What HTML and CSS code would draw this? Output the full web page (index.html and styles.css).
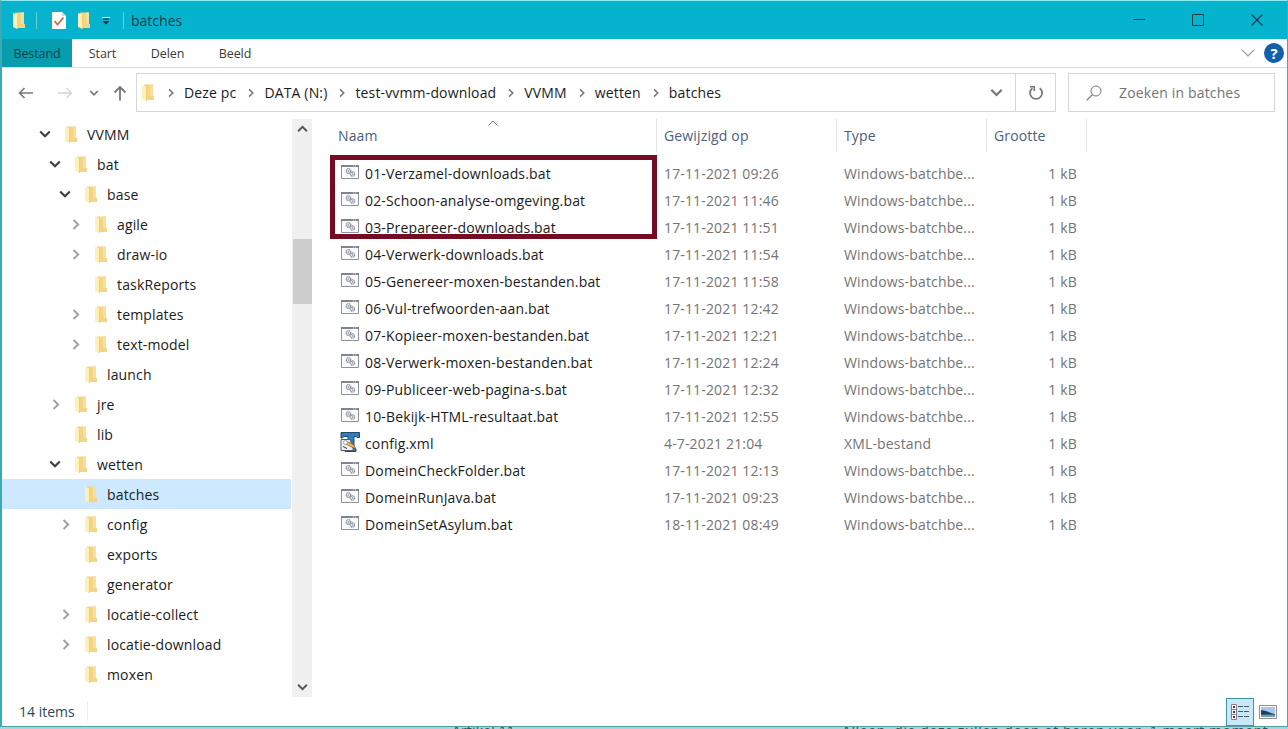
FILE: index.html
```html
<!DOCTYPE html>
<html lang="nl">
<head>
    <meta charset="UTF-8">
    <meta name="viewport" content="width=device-width, initial-scale=1.0">
    <title>batches</title>
    <link rel="stylesheet" href="styles.css">
</head>
<body>
    <!-- Shared icons -->
    <svg class="sprite" width="0" height="0">
        <symbol id="folder" viewBox="0 0 14 17">
            <path d="M3 .5h9v11l1 1V16H5z" fill="#f3d583"/>
            <path d="M9 .5h3v11.500H9z" fill="#f8e09a"/>
            <path d="M1 1l4.500 1.500V17L1 15z" fill="#fdf0b8"/>
            <path d="M5.500 2.500V17" stroke="#ecca74" stroke-width=".8"/>
        </symbol>
        <symbol id="right" viewBox="0 0 10 12">
            <path d="M2.500 1.500L7.200 6l-4.700 4.500" fill="none" stroke="currentColor" stroke-width="1.900"/>
        </symbol>
        <symbol id="down" viewBox="0 0 12 10">
            <path d="M1.200 2.500L6 7.300l4.800-4.800" fill="none" stroke="currentColor" stroke-width="2.100"/>
        </symbol>
        <symbol id="bat" viewBox="0 0 18 14">
            <path d="M.5.500h17v13H.5z" fill="#fbfbfd" stroke="#8e9299"/>
            <path d="M0 1h18" stroke="#80858d" stroke-width="2"/>
            <path d="M12 1h4" stroke="#e4e6ea" stroke-dasharray="1 1"/>
            <circle cx="7.500" cy="6" r="2.300" fill="#eceef1" stroke="#858b95" stroke-width="1.200" stroke-dasharray="1.300 .4"/>
            <circle cx="7.500" cy="6" r=".8" fill="#858b95"/>
            <circle cx="11.500" cy="9" r="2.100" fill="#eceef1" stroke="#858b95" stroke-width="1.200" stroke-dasharray="1.300 .4"/>
            <circle cx="11.500" cy="9" r=".7" fill="#858b95"/>
        </symbol>
        <symbol id="xml" viewBox="0 0 20 20">
            <path d="M1 .5h18.500v5H17l-1-1h-2V16l2 1v2.500H5V16l3-1V4.500H4L2 6H1z" fill="#2f7dbb" stroke="#24486a"/>
            <path d="M1 7.500h9l3 8.500v2.500H1z" fill="#edf0f1" stroke="#51606c"/>
            <path d="M6 9l7 3.500 3 4-4.500-1.500L6 12z" fill="#edb45d" stroke="#8b632c" stroke-width=".7"/>
            <circle cx="5.500" cy="10.500" r="2" fill="#fff" stroke="#86909b" stroke-width=".8"/>
            <path d="M3 14.500l4 2" stroke="#303c46"/>
        </symbol>
    </svg>

    <div class="window">
        <header class="titlebar">
            <svg class="folder title-folder"><use href="#folder"/></svg>
            <span class="divider"></span>
            <svg class="check" viewBox="0 0 14 17"><path d="M0 0h10l4 4v13H0z" fill="#fff"/><path d="M10 0v4h4" fill="#cdd8df"/><path d="M2.500 9l3 3.500 6-7" fill="none" stroke="#c9704f" stroke-width="1.800"/></svg>
            <svg class="folder quick-folder"><use href="#folder"/></svg>
            <svg class="customize" viewBox="0 0 8 8"><path d="M0 .5h8" stroke="#d7f4f8"/><path d="M1 2h6" stroke="#123"/><path d="M.5 4h7L4 7.500z" fill="#123"/></svg>
            <span class="divider"></span>
            <span class="title">batches</span>
            <div class="controls">
                <svg viewBox="0 0 12 12"><path d="M0 5.500h12" stroke="#183947"/></svg>
                <svg viewBox="0 0 12 12"><path d="M.5.500h11v11H.5z" fill="none" stroke="#183947"/></svg>
                <svg viewBox="0 0 12 12"><path d="M.5.500l11 11m0-11l-11 11" stroke="#183947" stroke-width="1.200"/></svg>
            </div>
        </header>

        <nav class="ribbon">
            <span class="tab active">Bestand</span>
            <span class="tab start">Start</span>
            <span class="tab delen">Delen</span>
            <span class="tab beeld">Beeld</span>
            <svg class="expand" viewBox="0 0 14 8"><path d="M.7.700L7 7 13.300.700" fill="none" stroke="#969696" stroke-width="1.100"/></svg>
            <span class="help">?</span>
        </nav>

        <div class="toolbar">
            <svg class="back" viewBox="0 0 16 12"><path d="M15 6H1.500M6.500 1l-5 5 5 5" fill="none" stroke="#777" stroke-width="1.600"/></svg>
            <svg class="forward" viewBox="0 0 16 12"><path d="M1 6h13.500M9.500 1l5 5-5 5" fill="none" stroke="#d4d4d4" stroke-width="1.400"/></svg>
            <svg class="recent"><use href="#down"/></svg>
            <svg class="up" viewBox="0 0 14 16"><path d="M7 15.500V2M1.500 7.500L7 2l5.500 5.500" fill="none" stroke="#777" stroke-width="1.800"/></svg>
            <div class="address">
                <svg class="folder"><use href="#folder"/></svg>
                <div class="crumbs" id="crumbs"></div>
                <svg class="history"><use href="#down"/></svg>
                <div class="refresh"><svg viewBox="0 0 16 16"><path d="M11.700 3.200a6 6 0 1 1-7.300 0" fill="none" stroke="#777" stroke-width="1.800"/><path d="M2 1.800h4.300v4.300" fill="none" stroke="#777" stroke-width="1.600"/></svg></div>
            </div>
            <div class="search">
                <svg viewBox="0 0 16 16"><circle cx="10" cy="6" r="5" fill="none" stroke="#777"/><path d="M6.500 9.500L.7 15.300" stroke="#777" stroke-width="1.200"/></svg>
                <span>Zoeken in batches</span>
            </div>
        </div>

        <main class="content">
            <div class="tree" id="tree"></div>
            <div class="scrollbar">
                <svg class="scroll-up"><use href="#down"/></svg>
                <div class="thumb"></div>
                <svg class="scroll-down"><use href="#down"/></svg>
            </div>
            <section class="files">
                <div class="file-head">
                    <span class="head-name">Naam<svg class="sort" viewBox="0 0 10 6"><path d="M.5 5.500L5 1l4.500 4.500" fill="none" stroke="#777"/></svg></span>
                    <span>Gewijzigd op</span>
                    <span>Type</span>
                    <span>Grootte</span>
                </div>
                <div id="files"></div>
                <div class="marker"></div>
            </section>
        </main>

        <footer class="status">
            <span class="count">14 items</span>
            <span class="view selected"><svg viewBox="0 0 18 16"><path d="M.5.500h5v15h-5zM.5 5.500h5M.5 10.500h5" fill="#fff" stroke="#8b7f8a"/><path d="M2 3h2M2 8h2M2 13h2" stroke="#223c55" stroke-width="2"/><path d="M7 2.500h5m1 0h5M7 7.500h5m1 0h5M7 12.500h5m1 0h5" stroke="#4c5c67"/></svg></span>
            <span class="view"><svg viewBox="0 0 18 14"><path d="M.5.500h17v13H.5z" fill="#fff" stroke="#918d88"/><path d="M2 2h14v10H2z" fill="#a9c8e9"/><path d="M2 6l5 1 9 2v1H2z" fill="#3a6480"/><path d="M2 5l5 1 7 3H2z" fill="#203f5c"/><path d="M2 10h14v2H2z" fill="#6fa0b8"/></svg></span>
        </footer>
    </div>
    <div class="behind"><span class="behind-title">Artikel 11</span><span class="behind-text">Alleen, die deze zullen doen of horen voor, 1 maart moment</span></div>

    <script>
        const crumbs = ['Deze pc', 'DATA (N:)', 'test-vvmm-download', 'VVMM', 'wetten', 'batches'];
        // level, name, state of the arrow
        const tree = [
            [0, 'VVMM', 'down'], [1, 'bat', 'down'], [2, 'base', 'down'],
            [3, 'agile', 'right'], [3, 'draw-io', 'right'], [3, 'taskReports', ''],
            [3, 'templates', 'right'], [3, 'text-model', 'right'], [2, 'launch', ''],
            [1, 'jre', 'right'], [1, 'lib', ''], [1, 'wetten', 'down'],
            [2, 'batches', ''], [2, 'config', 'right'], [2, 'exports', ''],
            [2, 'generator', ''], [2, 'locatie-collect', 'right'],
            [2, 'locatie-download', 'right'], [2, 'moxen', '']
        ];
        const files = [
            ['01-Verzamel-downloads.bat', '17-11-2021 09:26'],
            ['02-Schoon-analyse-omgeving.bat', '17-11-2021 11:46'],
            ['03-Prepareer-downloads.bat', '17-11-2021 11:51'],
            ['04-Verwerk-downloads.bat', '17-11-2021 11:54'],
            ['05-Genereer-moxen-bestanden.bat', '17-11-2021 11:58'],
            ['06-Vul-trefwoorden-aan.bat', '17-11-2021 12:42'],
            ['07-Kopieer-moxen-bestanden.bat', '17-11-2021 12:21'],
            ['08-Verwerk-moxen-bestanden.bat', '17-11-2021 12:24'],
            ['09-Publiceer-web-pagina-s.bat', '17-11-2021 12:32'],
            ['10-Bekijk-HTML-resultaat.bat', '17-11-2021 12:55'],
            ['config.xml', '4-7-2021 21:04'],
            ['DomeinCheckFolder.bat', '17-11-2021 12:13'],
            ['DomeinRunJava.bat', '17-11-2021 09:23'],
            ['DomeinSetAsylum.bat', '18-11-2021 08:49']
        ];

        document.getElementById('crumbs').innerHTML = crumbs.map(name =>
            `<span class="crumb"><svg><use href="#right"/></svg>${name}</span>`).join('');

        document.getElementById('tree').innerHTML = tree.map(([level, name, arrow]) => `
            <div class="node level${level}${name === 'batches' ? ' selected' : ''}">
                <span class="arrow">${arrow ? `<svg class="${arrow}"><use href="#${arrow}"/></svg>` : ''}</span>
                <svg class="folder"><use href="#folder"/></svg>
                <span>${name}</span>
            </div>`).join('');

        document.getElementById('files').innerHTML = files.map(([name, date]) => {
            const xml = name.endsWith('.xml');
            return `<div class="file">
                <span class="name"><i><svg class="${xml ? 'xml' : 'bat'}"><use href="#${xml ? 'xml' : 'bat'}"/></svg></i>${name}</span>
                <span>${date}</span>
                <span>${xml ? 'XML-bestand' : 'Windows-batchbe...'}</span>
                <span class="size">1 kB</span>
            </div>`;
        }).join('');
    </script>
</body>
</html>
```
FILE: styles.css
```css
* {
    box-sizing: border-box;
}

body {
    margin: 0;
    width: 1288px;
    height: 729px;
    overflow: hidden;
    background: #a9d5dc;
    font-family: "Open Sans", "Noto Sans", sans-serif;
    font-size: 14px;
    letter-spacing: 0.15px;
    color: #1b1b1b;
}

svg {
    display: block;
    flex: none;
}

.sprite {
    position: absolute;
}

.window {
    display: flex;
    flex-direction: column;
    height: 727px;
    background: #fff;
    border: 1px solid #4f9ea6;
    border-top-color: #8ceaf0;
    border-left: 2px solid #3aaab5;
    border-right-color: #2cb4c1;
}

.folder {
    width: 14px;
    height: 17px;
}

.titlebar {
    display: flex;
    align-items: center;
    flex: none;
    height: 38px;
    padding-left: 10px;
    background: #06b3ce;
}

.divider {
    width: 1px;
    height: 17px;
    background: #69cbd7;
}

.title-folder {
    margin-right: 10px;
}

.check {
    width: 14px;
    height: 17px;
    margin: 0 11px 0 15px;
}

.customize {
    width: 8px;
    height: 8px;
    margin: 2px 13px 0 11px;
}

.title {
    margin-left: 7px;
    letter-spacing: 0;
    color: #123c49;
}

.controls {
    display: flex;
    gap: 47px;
    margin-left: auto;
    margin-right: 24px;
}

.controls svg {
    width: 12px;
    height: 12px;
}

.ribbon {
    display: flex;
    align-items: center;
    flex: none;
    height: 29px;
    border-bottom: 1px solid #d9dcdc;
    font-size: 12.500px;
    letter-spacing: -0.1px;
}

.tab {
    width: 66px;
    text-align: center;
    color: #3a3a3a;
}

.tab.active {
    width: 70px;
    height: 28px;
    line-height: 29px;
    background: #079cae;
    color: #103c46;
}

.tab.start {
    width: 61px;
}

.tab.delen {
    width: 69px;
}

.expand {
    width: 14px;
    height: 8px;
    margin-left: auto;
}

.help {
    width: 20px;
    height: 20px;
    margin: 0 3px 0 9px;
    border-radius: 50%;
    background: #1260ab;
    color: #fff;
    font-size: 15px;
    font-weight: bold;
    line-height: 20px;
    text-align: center;
}

.toolbar {
    display: flex;
    align-items: center;
    flex: none;
    height: 49px;
    padding: 5px 12px 5px 16px;
}

.back,
.forward {
    width: 16px;
    height: 12px;
}

.forward {
    margin-left: 23px;
}

.recent {
    width: 10px;
    height: 8px;
    margin: 0 14px 0 16px;
    color: #777;
}

.up {
    width: 14px;
    height: 16px;
    margin-right: 9px;
}

.address {
    display: flex;
    align-items: center;
    flex: none;
    width: 920px;
    height: 39px;
    padding-left: 4px;
    border: 1px solid #d5d7d7;
}

.crumbs {
    display: flex;
    flex: 1;
    margin-left: 12px;
}

.crumb {
    display: flex;
    align-items: center;
    margin-right: 11px;
}

.crumb svg {
    width: 8px;
    height: 10px;
    margin-right: 9px;
    color: #777;
}

.history {
    width: 13px;
    height: 11px;
    margin-right: 12px;
    color: #777;
}

.refresh {
    display: flex;
    align-items: center;
    justify-content: center;
    width: 40px;
    height: 37px;
    border-left: 1px solid #d5d7d7;
}

.refresh svg {
    width: 16px;
    height: 16px;
}

.search {
    display: flex;
    align-items: center;
    width: 207px;
    height: 39px;
    margin-left: 12px;
    padding-left: 17px;
    border: 1px solid #d5d7d7;
    color: #747474;
}

.search svg {
    width: 16px;
    height: 16px;
    margin-right: 17px;
}

.content {
    display: flex;
    flex: none;
    height: 580px;
}

.tree {
    width: 289px;
    padding-top: 2px;
}

.node {
    display: flex;
    align-items: center;
    height: 30px;
    padding-left: 36px;
}

.node .folder {
    margin: 0 9px 0 12px;
}

.node.selected {
    background: #cde8ff;
}

.level1 {
    padding-left: 46px;
}

.level2 {
    padding-left: 56px;
}

.level3 {
    padding-left: 66px;
}

.arrow {
    display: flex;
    justify-content: center;
    width: 14px;
}

.arrow .down {
    width: 12px;
    height: 10px;
    color: #404040;
}

.arrow .right {
    width: 10px;
    height: 13px;
    margin-left: 2px;
    color: #a0a0a0;
}

.scrollbar {
    display: flex;
    flex-direction: column;
    align-items: center;
    width: 20px;
    margin-top: 2px;
    margin-left: 1px;
    background: #f0f0f0;
}

.scrollbar svg {
    width: 11px;
    height: 10px;
    color: #555;
}

.scroll-up {
    margin-top: 5px;
    transform: rotate(180deg);
}

.thumb {
    width: 19px;
    height: 65px;
    margin-top: 105px;
    background: #cdcdcd;
}

.scroll-down {
    margin-top: auto;
    margin-bottom: 5px;
}

.files {
    position: relative;
    flex: 1;
    padding-left: 18px;
}

.file-head,
.file {
    display: grid;
    grid-template-columns: 327px 180px 150px 100px;
}

.file-head {
    height: 43px;
    padding-top: 2px;
    color: #4c607a;
}

.file-head span {
    height: 33px;
    padding-left: 7px;
    border-right: 1px solid #e2e4e6;
    line-height: 34px;
}

.file-head .head-name {
    position: relative;
    padding-left: 8px;
}

.sort {
    position: absolute;
    top: 1px;
    left: 158px;
    width: 10px;
    height: 6px;
}

.file {
    height: 27px;
    line-height: 27px;
    color: #747474;
}

.file > span {
    padding-left: 7px;
}

.file .name {
    display: flex;
    align-items: center;
    padding-left: 10px;
    color: #1b1b1b;
}

.name i {
    display: flex;
    justify-content: center;
    width: 20px;
    margin-right: 5px;
}

.bat {
    width: 18px;
    height: 14px;
    margin-top: -3px;
}

.xml {
    width: 20px;
    height: 20px;
    margin-top: -3px;
}

.file .size {
    padding-right: 10px;
    text-align: right;
}

/* Red frame around the first three batch files */
.marker {
    position: absolute;
    top: 38px;
    left: 18px;
    width: 327px;
    height: 84px;
    border: 5px solid #740c24;
}

.status {
    display: flex;
    align-items: center;
    flex: 1;
    padding-left: 17px;
}

.count {
    width: 69px;
    margin-right: auto;
    border-right: 1px solid #eee;
    letter-spacing: 0;
    color: #31465a;
}

.view {
    display: flex;
    align-items: center;
    justify-content: center;
    width: 28px;
    height: 28px;
    margin-right: 5px;
}

.view.selected {
    margin-right: 0;
    border: 1px solid #4395a1;
    background: #c8e8f7;
}

.view svg {
    width: 18px;
}

/* Tops of the text lines in the window underneath */
.behind {
    display: flex;
    height: 2px;
    overflow: hidden;
    color: #2d5360;
    line-height: 8px;
}

.behind-title {
    width: 390px;
    padding-left: 452px;
    box-sizing: content-box;
}

.behind-text {
    white-space: nowrap;
    letter-spacing: 0.6px;
}
```
